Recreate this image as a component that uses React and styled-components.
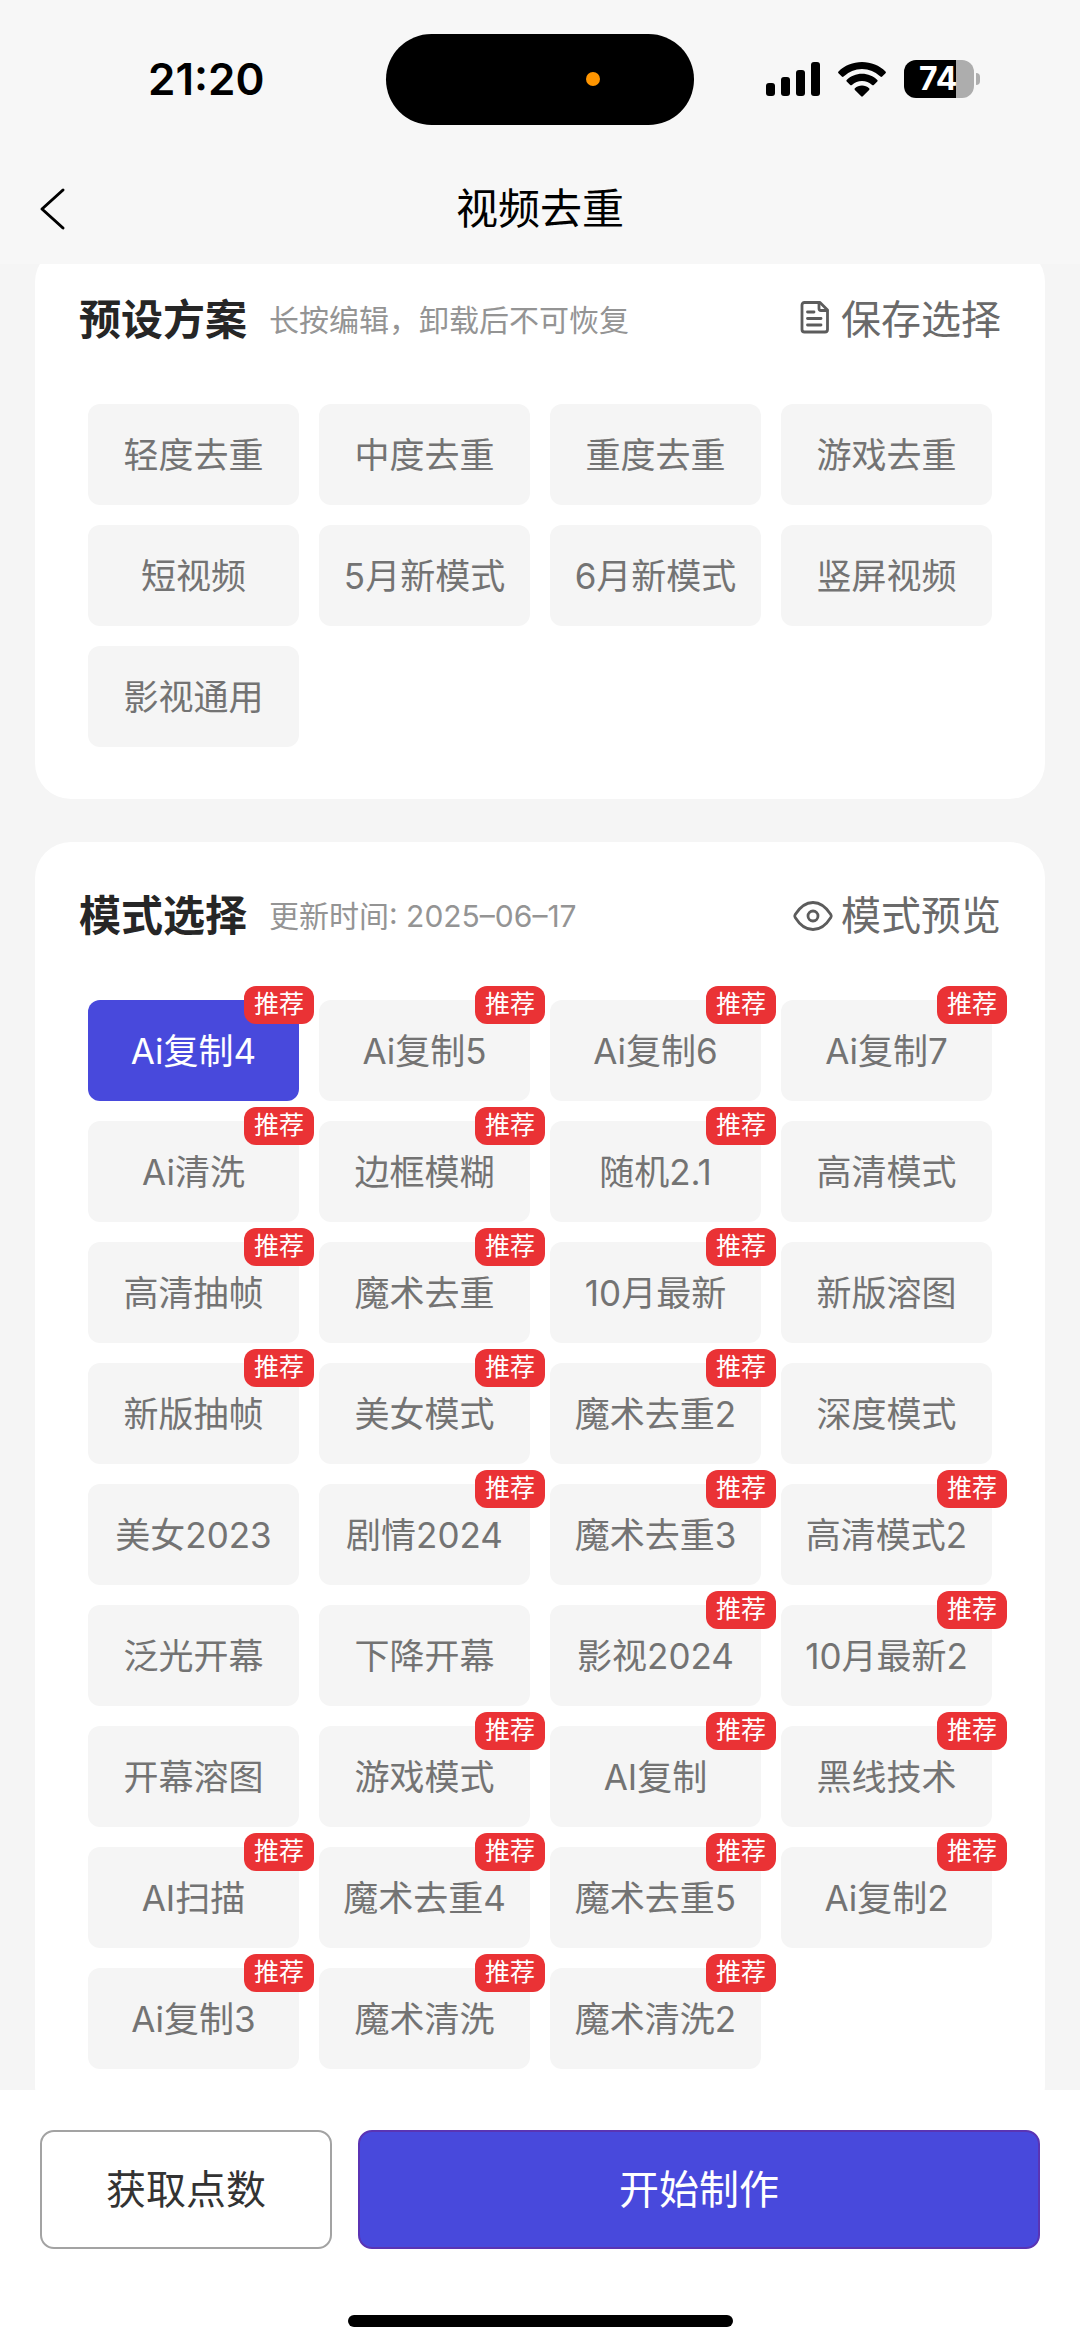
import React, { useState } from "react";
import styled, { createGlobalStyle } from "styled-components";

const GlobalStyle = createGlobalStyle`
  * {
    box-sizing: border-box;
  }
  body {
    margin: 0;
    background: #f5f5f5;
    font-family: Inter, "Noto Sans CJK SC", sans-serif;
  }
  button {
    font-family: inherit;
    padding: 0;
    border: none;
    background: none;
    cursor: pointer;
  }
`;

const Page = styled.div`
  display: flex;
  flex-direction: column;
  height: 100vh;
  overflow: hidden;
`;

const Header = styled.header`
  position: relative;
  z-index: 1;
  background: #f7f7f7;
`;

const StatusBar = styled.div`
  display: grid;
  grid-template-columns: 1fr 308px 1fr;
  align-items: center;
  height: 158px;
  padding: 0 100px;
`;

const Clock = styled.time`
  padding-left: 48px;
  font-size: 44px;
  font-weight: 600;
  line-height: 52px;
  color: #000;
`;

const Island = styled.div`
  display: flex;
  align-items: center;
  justify-content: flex-end;
  height: 91px;
  padding-right: 94px;
  border-radius: 46px;
  background: #000;
`;

const RecordingDot = styled.span`
  width: 14px;
  height: 14px;
  border-radius: 50%;
  background: #ff9500;
`;

const StatusIcons = styled.div`
  display: flex;
  align-items: center;
  justify-content: flex-end;
  gap: 18px;
`;

const BatteryWrapper = styled.div`
  display: flex;
  align-items: center;
  gap: 2px;
  .cell {
    width: 70px;
    height: 38px;
    border-radius: 12px;
    background: linear-gradient(to right, #000 52px, #adadad 52px);
    color: #fff;
    font-size: 32px;
    font-weight: 700;
    line-height: 38px;
    padding-left: 15px;
  }
  .cap {
    width: 4px;
    height: 12px;
    border-radius: 0 4px 4px 0;
    background: #adadad;
  }
`;

const NavBar = styled.div`
  display: grid;
  grid-template-columns: 1fr auto 1fr;
  align-items: center;
  height: 106px;
  padding: 0 36px 4px;
  h1 {
    margin: 0;
    font-size: 42px;
    font-weight: 400;
    line-height: 60px;
    color: #000;
  }
`;

const BackButton = styled.button`
  display: flex;
  justify-self: start;
`;

const Content = styled.main`
  flex: 1;
  min-height: 0;
  margin-top: -18px;
  padding: 0 35px;
  overflow-y: auto;
  scrollbar-width: none;
`;

const Card = styled.section`
  margin-bottom: 43px;
  padding: 44px 44px 52px;
  border-radius: 36px;
  background: #fff;
`;

const CardHead = styled.div`
  display: flex;
  align-items: center;
  height: 60px;
  margin-bottom: 54px;
  h2 {
    margin: 0;
    font-size: 42px;
    font-weight: 700;
    line-height: 60px;
    color: #262626;
  }
  p {
    flex: 1;
    margin: 0 0 0 22px;
    font-size: 30px;
    line-height: 44px;
    color: #949494;
  }
`;

const HeadAction = styled.button`
  display: flex;
  align-items: center;
  gap: 8px;
  font-size: 40px;
  line-height: 60px;
  color: #6a6a6a;
`;

const Grid = styled.div`
  display: grid;
  grid-template-columns: repeat(4, 1fr);
  gap: 20px;
  padding: 0 9px;
`;

const Tile = styled.button`
  position: relative;
  height: 101px;
  border-radius: 12px;
  background: ${(props) => (props.$active ? "#4849dc" : "#f5f5f5")};
  color: ${(props) => (props.$active ? "#fff" : "#737373")};
  font-size: 35px;
  line-height: 50px;
  white-space: nowrap;
`;

const Badge = styled.span`
  position: absolute;
  top: -14px;
  right: -15px;
  width: 70px;
  height: 38px;
  border-radius: 12px;
  background: #ea3235;
  color: #fff;
  font-size: 25px;
  line-height: 36px;
  text-align: center;
`;

const Footer = styled.footer`
  position: relative;
  padding: 40px 40px 20px;
  background: #fff;
`;

const Actions = styled.div`
  display: grid;
  grid-template-columns: 3fr 7fr;
  gap: 26px;
`;

const ActionButton = styled.button`
  height: 119px;
  border: 2px solid ${(props) => (props.$primary ? "#5a34b4" : "#a3a3a3")};
  border-radius: 14px;
  background: ${(props) => (props.$primary ? "#4849dc" : "#fff")};
  color: ${(props) => (props.$primary ? "#fff" : "#333")};
  font-size: 40px;
  line-height: 60px;
`;

const HomeIndicator = styled.div`
  width: 385px;
  height: 12px;
  margin: 66px auto 0;
  border-radius: 6px;
  background: #000;
`;

const presets = [
  "轻度去重",
  "中度去重",
  "重度去重",
  "游戏去重",
  "短视频",
  "5月新模式",
  "6月新模式",
  "竖屏视频",
  "影视通用",
];

const modes = [
  { name: "Ai复制4", hot: true },
  { name: "Ai复制5", hot: true },
  { name: "Ai复制6", hot: true },
  { name: "Ai复制7", hot: true },
  { name: "Ai清洗", hot: true },
  { name: "边框模糊", hot: true },
  { name: "随机2.1", hot: true },
  { name: "高清模式" },
  { name: "高清抽帧", hot: true },
  { name: "魔术去重", hot: true },
  { name: "10月最新", hot: true },
  { name: "新版溶图" },
  { name: "新版抽帧", hot: true },
  { name: "美女模式", hot: true },
  { name: "魔术去重2", hot: true },
  { name: "深度模式" },
  { name: "美女2023" },
  { name: "剧情2024", hot: true },
  { name: "魔术去重3", hot: true },
  { name: "高清模式2", hot: true },
  { name: "泛光开幕" },
  { name: "下降开幕" },
  { name: "影视2024", hot: true },
  { name: "10月最新2", hot: true },
  { name: "开幕溶图" },
  { name: "游戏模式", hot: true },
  { name: "AI复制", hot: true },
  { name: "黑线技术", hot: true },
  { name: "AI扫描", hot: true },
  { name: "魔术去重4", hot: true },
  { name: "魔术去重5", hot: true },
  { name: "Ai复制2", hot: true },
  { name: "Ai复制3", hot: true },
  { name: "魔术清洗", hot: true },
  { name: "魔术清洗2", hot: true },
];

function SignalIcon() {
  return (
    <svg width="54" height="34" viewBox="0 0 54 34" aria-hidden="true">
      <rect x="0" y="21" width="9" height="13" rx="3" />
      <rect x="15" y="15" width="9" height="19" rx="3" />
      <rect x="30" y="8" width="9" height="26" rx="3" />
      <rect x="45" y="0" width="9" height="34" rx="3" />
    </svg>
  );
}

function WifiIcon() {
  return (
    <svg width="48" height="35" viewBox="0 0 48 35" aria-hidden="true">
      <path d="M24 0C33 0 41.500 3.500 47.500 9.500Q48.300 10.400 47.500 11.200L44.200 14.500Q43.300 15.300 42.400 14.500A26.500 26.500 0 0 0 5.600 14.500Q4.700 15.300 3.800 14.500L.5 11.200Q-.3 10.400 .5 9.500C6.500 3.500 15 0 24 0Z" />
      <path d="M24 11.800C29.900 11.800 35.300 14.100 39.300 17.900Q40.100 18.700 39.300 19.500L35.800 22.900Q35 23.600 34.100 22.900A15 15 0 0 0 13.900 22.900Q13 23.600 12.200 22.900L8.700 19.500Q7.900 18.700 8.700 17.900C12.700 14.100 18.100 11.800 24 11.800Z" />
      <path d="M24 23.500C26.700 23.500 29.200 24.500 31.100 26.200Q32 27 31.100 27.900L24.800 34.300Q24 35 23.200 34.300L16.900 27.900Q16 27 16.900 26.200C18.800 24.500 21.300 23.500 24 23.500Z" />
    </svg>
  );
}

function BackIcon() {
  return (
    <svg width="32" height="44" viewBox="0 0 32 44" fill="none" aria-hidden="true">
      <path
        d="M27 3L6 22L27 41"
        stroke="#000"
        strokeWidth="3"
        strokeLinecap="round"
        strokeLinejoin="round"
      />
    </svg>
  );
}

function FileIcon() {
  return (
    <svg width="36" height="40" viewBox="0 0 36 40" fill="none" stroke="#5c5c5c" aria-hidden="true">
      <g strokeWidth="2.800" strokeLinecap="round" strokeLinejoin="round">
        <path d="M7.500 2.500H23L30.500 10V29.500Q30.500 32 28 32H7.500Q5 32 5 29.500V5Q5 2.500 7.500 2.500Z" />
        <path d="M22 3V8.500Q22 10.500 24 10.500H30" />
        <path d="M10.500 12H17" />
        <path d="M10.500 18.500H24" />
        <path d="M10.500 25H24" />
      </g>
    </svg>
  );
}

function EyeIcon() {
  return (
    <svg width="40" height="30" viewBox="0 0 40 30" fill="none" stroke="#5c5c5c" aria-hidden="true">
      <path
        d="M2.200 13.600C6.800 6.200 12.600 1.500 20 1.500S33.200 6.200 37.800 13.600Q38.600 15 37.800 16.400C33.200 23.800 27.400 28.500 20 28.500S6.800 23.800 2.200 16.400Q1.400 15 2.200 13.600Z"
        strokeWidth="2.800"
      />
      <circle cx="20" cy="15" r="5" strokeWidth="2.800" />
    </svg>
  );
}

function Battery() {
  return (
    <BatteryWrapper>
      <div className="cell">74</div>
      <div className="cap" />
    </BatteryWrapper>
  );
}

function App() {
  const [preset, setPreset] = useState(null);
  const [mode, setMode] = useState("Ai复制4");

  return (
    <Page>
      <GlobalStyle />
      <Header>
        <StatusBar>
          <Clock>21:20</Clock>
          <Island>
            <RecordingDot />
          </Island>
          <StatusIcons>
            <SignalIcon />
            <WifiIcon />
            <Battery />
          </StatusIcons>
        </StatusBar>
        <NavBar>
          <BackButton type="button" aria-label="返回">
            <BackIcon />
          </BackButton>
          <h1>视频去重</h1>
        </NavBar>
      </Header>

      <Content>
        <Card>
          <CardHead>
            <h2>预设方案</h2>
            <p>长按编辑，卸载后不可恢复</p>
            <HeadAction type="button">
              <FileIcon />
              保存选择
            </HeadAction>
          </CardHead>
          <Grid>
            {presets.map((name) => (
              <Tile
                key={name}
                type="button"
                $active={preset === name}
                aria-pressed={preset === name}
                onClick={() => setPreset(name)}
              >
                {name}
              </Tile>
            ))}
          </Grid>
        </Card>

        <Card>
          <CardHead>
            <h2>模式选择</h2>
            <p>更新时间: 2025–06–17</p>
            <HeadAction type="button">
              <EyeIcon />
              模式预览
            </HeadAction>
          </CardHead>
          <Grid>
            {modes.map(({ name, hot }) => (
              <Tile
                key={name}
                type="button"
                $active={mode === name}
                aria-pressed={mode === name}
                onClick={() => setMode(name)}
              >
                {name}
                {hot && <Badge>推荐</Badge>}
              </Tile>
            ))}
          </Grid>
        </Card>
      </Content>

      <Footer>
        <Actions>
          <ActionButton type="button">获取点数</ActionButton>
          <ActionButton type="button" $primary>
            开始制作
          </ActionButton>
        </Actions>
        <HomeIndicator />
      </Footer>
    </Page>
  );
}

export default App;
